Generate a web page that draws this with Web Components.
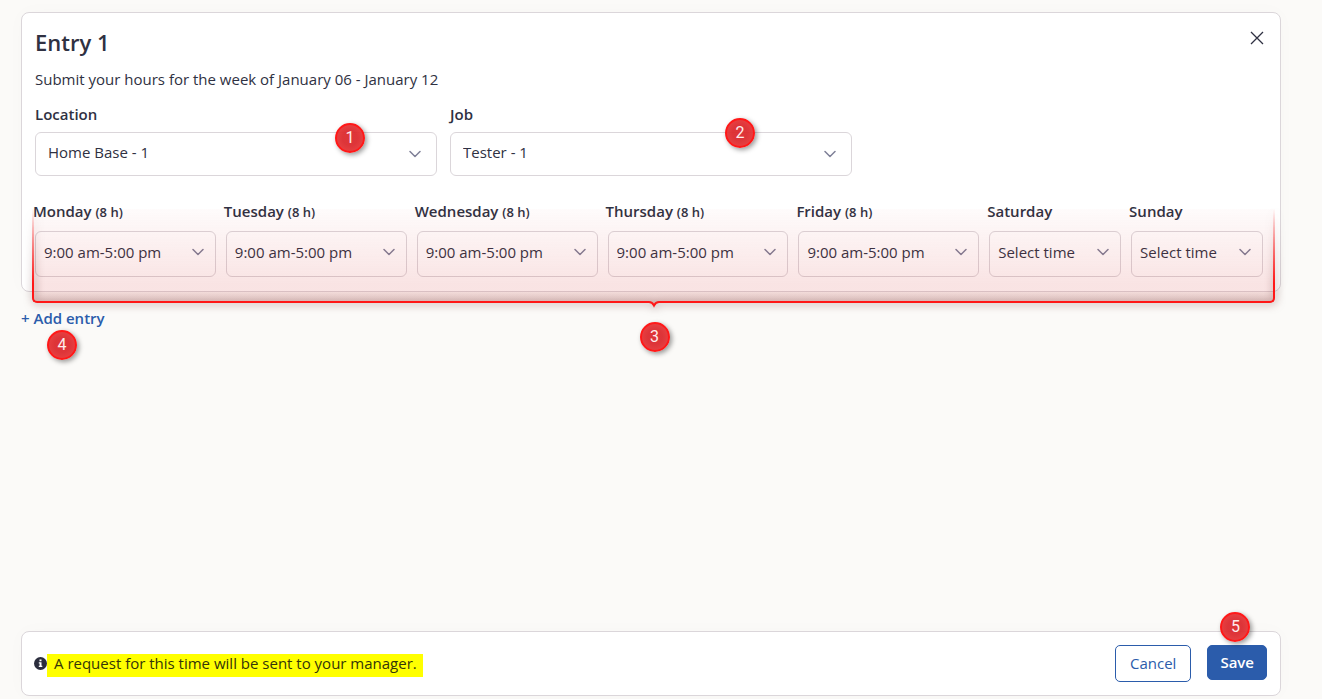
<!DOCTYPE html>
<html lang="en">
<head>
<meta charset="utf-8">
<meta name="viewport" content="width=device-width, initial-scale=1">
<title>Submit hours</title>
<style>
  html { --ink: #2f3142; --line: #dbd6da; --blue: #2b5cab; --page: #fbfaf8; --red: #ff1818; }
  body { margin: 0; background: var(--page); color: var(--ink); font: 15px/20px "Open Sans", sans-serif; }
</style>
</head>
<body>
<timesheet-page></timesheet-page>

<template id="t-page">
  <style>
    :host { display: flex; flex-direction: column; min-height: 100vh; box-sizing: border-box; padding: 12px 41px 3px 21px; }
    .fields { display: grid; grid-template-columns: repeat(3, minmax(0, 1fr)); gap: 13px; margin-top: 13px; }
    .days { position: relative; display: grid; gap: 8px; margin: 25px 0 0 -2px; padding-right: 4px;
      grid-template-columns: repeat(5, minmax(0, 183fr)) repeat(2, minmax(0, 134fr)); }
    span-bracket { position: absolute; inset: 8px -8px -31px -1px; }
    save-bar { margin-top: auto; }
    .b1 { right: 72px; top: -9px; }
    .b2 { right: 97px; top: -14px; }
    .b3 { left: calc(50% - 14px); top: calc(100% + 14px); }
    .b4 { left: 26px; top: 22px; }
    .b5 { left: 13px; top: -33px; }
  </style>
  <entry-card heading="Entry 1" note="Submit your hours for the week of January 06 - January 12">
    <div class="fields">
      <select-field label="Location" value="Home Base - 1"><step-badge class="b1">1</step-badge></select-field>
      <select-field label="Job" value="Tester - 1"><step-badge class="b2">2</step-badge></select-field>
    </div>
    <div class="days">
      <select-field day label="Monday" hours="(8 h)" value="9:00 am-5:00 pm"></select-field>
      <select-field day label="Tuesday" hours="(8 h)" value="9:00 am-5:00 pm"></select-field>
      <select-field day label="Wednesday" hours="(8 h)" value="9:00 am-5:00 pm"></select-field>
      <select-field day label="Thursday" hours="(8 h)" value="9:00 am-5:00 pm"></select-field>
      <select-field day label="Friday" hours="(8 h)" value="9:00 am-5:00 pm"></select-field>
      <select-field day label="Saturday" value="Select time"></select-field>
      <select-field day label="Sunday" value="Select time"></select-field>
      <span-bracket><step-badge class="b3">3</step-badge></span-bracket>
    </div>
  </entry-card>
  <add-entry><step-badge class="b4">4</step-badge></add-entry>
  <save-bar><step-badge slot="save" class="b5">5</step-badge></save-bar>
</template>

<template id="t-card">
  <style>
    :host { display: block; box-sizing: border-box; padding: 12px 13px 14px; border: 1px solid var(--line); border-radius: 8px;
      background: #fff; box-shadow: 0 0 20px rgba(0, 0, 0, .02); }
    header { display: flex; justify-content: space-between; align-items: flex-start; }
    h2 { margin: 0; font-size: 22px; line-height: 34px; font-weight: 600; }
    p { margin: 8px 0 0; line-height: 24px; }
    button { display: flex; margin: 3px 0 0; padding: 3px; border: 0; background: none; color: inherit; }
  </style>
  <header>
    <h2></h2>
    <button type="button" aria-label="Close">
      <svg width="14" height="14" viewBox="0 0 14 14" fill="none" stroke="currentColor" stroke-width="1.3"><path d="M1 1l12 12M13 1L1 13"/></svg>
    </button>
  </header>
  <p></p>
  <slot></slot>
</template>

<template id="t-select">
  <style>
    :host { display: block; min-width: 0; }
    label { display: block; white-space: nowrap; font-weight: 600; line-height: 20px; }
    small { font-size: 13px; line-height: 1; }
    .box { position: relative; display: grid; align-items: center; margin-top: 8px; }
    select { grid-area: 1 / 1; appearance: none; width: 100%; height: 44px; box-sizing: border-box; margin: 0; padding: 0 34px 4px 12px;
      border: 1px solid var(--line); border-radius: 6px; background: #fff; color: inherit; font: inherit; }
    svg { grid-area: 1 / 1; justify-self: end; margin-right: 16px; pointer-events: none; }
    :host([day]) .box { margin: 10px 0 0 2px; }
    :host([day]) select { height: 46px; padding: 0 24px 4px 8px; }
    :host([day]) svg { margin: 0 12px 4px 0; }
  </style>
  <label for="s"><span></span> <small></small></label>
  <div class="box">
    <select id="s"><option></option></select>
    <svg width="12" height="8" viewBox="0 0 12 8" fill="none" stroke="#7f8098" stroke-width="1.5" stroke-linecap="round" stroke-linejoin="round"><path d="M1 1.5l5 5 5-5"/></svg>
    <slot></slot>
  </div>
</template>

<template id="t-bracket">
  <style>
    :host { display: block; pointer-events: none; }
    .tint { position: absolute; inset: 0 0 5px; border-radius: 0 0 5px 5px;
      background: linear-gradient(transparent calc(100% - 12px), rgba(90, 40, 40, .12)),
        linear-gradient(rgba(214, 60, 60, .02), rgba(214, 60, 60, .14) 80%); }
    .shade { position: absolute; inset: 0; filter: drop-shadow(1px 1px 4px rgba(60, 0, 0, .6)); }
    .line { display: flex; height: 100%; mask-image: linear-gradient(transparent, #000 75%); }
    .arm { flex: 1; box-sizing: border-box; margin-bottom: 5px; border-bottom: 2px solid var(--red); }
    .left { border-left: 2px solid var(--red); border-bottom-left-radius: 5px; }
    .right { border-right: 2px solid var(--red); border-bottom-right-radius: 5px; }
    svg { align-self: flex-end; }
  </style>
  <div class="tint"></div>
  <div class="shade"><div class="line">
    <div class="arm left"></div>
    <svg width="10" height="7" viewBox="0 0 10 7" fill="none" stroke="#ff1818" stroke-width="2"><path d="M0 1C3 1 4 2.5 5 4.5C6 2.5 7 1 10 1"/></svg>
    <div class="arm right"></div>
  </div></div>
  <slot></slot>
</template>

<template id="t-add">
  <style>
    :host { position: relative; display: block; margin-top: 16px; }
    button { display: block; padding: 0; border: 0; background: none; color: var(--blue); font: inherit; font-weight: 600; }
  </style>
  <button type="button">+ Add entry</button>
  <slot></slot>
</template>

<template id="t-bar">
  <style>
    :host { display: flex; align-items: flex-start; gap: 16px; box-sizing: border-box; padding: 13px 13px 13px 12px; border: 1px solid var(--line);
      border-radius: 8px; background: #fff; box-shadow: 0 0 20px rgba(0, 0, 0, .02); }
    .note { display: flex; flex: 1; align-items: flex-start; margin-top: 9px; }
    .note svg { margin-top: 3px; flex: none; }
    mark { padding: 0 6px 5px 7px; background: #ff0; color: #34350a; line-height: 18px; }
    button { height: 37px; box-sizing: border-box; padding: 0 14px 2px; border: 1px solid var(--blue); border-radius: 5px;
      background: #fff; color: var(--blue); font: inherit; white-space: nowrap; }
    .save { height: 35px; padding: 0 12px 2px; background: var(--blue); color: #fff; font-weight: 600; }
    .anchor { position: relative; }
    .anchor button { display: block; }
  </style>
  <div class="note">
    <svg width="13" height="13" viewBox="0 0 13 13"><circle cx="6.5" cy="6.5" r="6.5" fill="#2b2d3d"/><path d="M5.5 2.5h2v1.8h-2zM4.8 5.3h2.7v3.5h.8v1.2H4.8V8.8h.8V6.5h-.8z" fill="#fff"/></svg>
    <mark>A request for this time will be sent to your manager.</mark>
  </div>
  <button type="button">Cancel</button>
  <div class="anchor"><button type="button" class="save">Save</button><slot name="save"></slot></div>
</template>

<template id="t-badge">
  <style>
    :host { position: absolute; z-index: 2; display: grid; place-items: center; box-sizing: border-box; width: 30px; height: 30px;
      border: 2px solid var(--red); border-radius: 50%; background: radial-gradient(rgba(220, 42, 46, .95) 40%, rgba(236, 62, 62, .95));
      box-shadow: 2px 2px 5px rgba(0, 0, 0, .4); color: #ffecec; font: 16px/20px Roboto, sans-serif; pointer-events: none; }
  </style>
  <slot></slot>
</template>

<script>
  class Base extends HTMLElement {
    constructor() {
      super();
      this.attachShadow({ mode: 'open' }).append(document.getElementById(this.constructor.tpl).content.cloneNode(true));
    }
    put(selector, name) { this.shadowRoot.querySelector(selector).textContent = this.getAttribute(name) || ''; }
  }
  customElements.define('step-badge', class extends Base { static tpl = 't-badge'; });
  customElements.define('span-bracket', class extends Base { static tpl = 't-bracket'; });
  customElements.define('add-entry', class extends Base { static tpl = 't-add'; });
  customElements.define('save-bar', class extends Base { static tpl = 't-bar'; });
  customElements.define('select-field', class extends Base {
    static tpl = 't-select';
    connectedCallback() { this.put('label span', 'label'); this.put('small', 'hours'); this.put('option', 'value'); }
  });
  customElements.define('entry-card', class extends Base {
    static tpl = 't-card';
    connectedCallback() { this.put('h2', 'heading'); this.put('p', 'note'); }
  });
  customElements.define('timesheet-page', class extends Base { static tpl = 't-page'; });
</script>
</body>
</html>
